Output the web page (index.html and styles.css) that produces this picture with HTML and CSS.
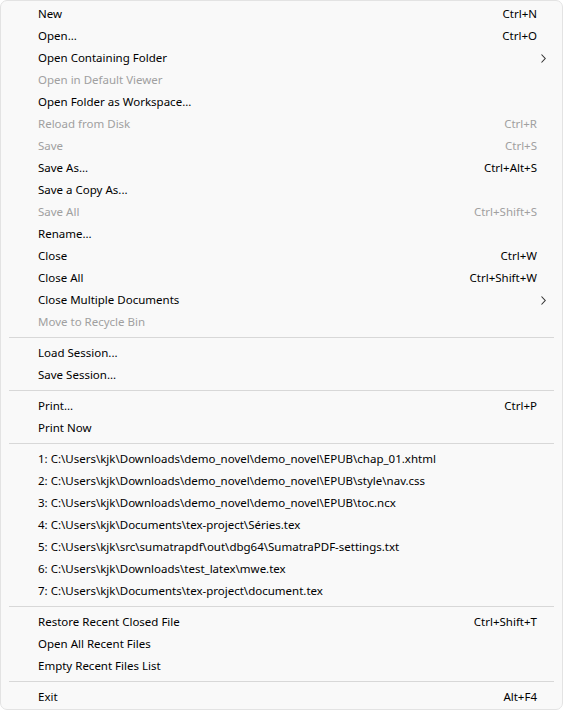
FILE: index.html
```html
<!DOCTYPE html>
<html>
<head>
<meta charset="utf-8">
<link rel="stylesheet" href="styles.css">
</head>
<body>
<div class="menu">
  <div class="item"><span class="label">New</span><span class="key">Ctrl+N</span></div>
  <div class="item"><span class="label">Open...</span><span class="key">Ctrl+O</span></div>
  <div class="item"><span class="label">Open Containing Folder</span><span class="key"></span><svg class="arrow" width="5" height="9" viewBox="0 0 5 9"><path d="M0.5 0.5 L4.2 4.5 L0.5 8.5" fill="none" stroke="#333" stroke-width="1.1"/></svg></div>
  <div class="item disabled"><span class="label">Open in Default Viewer</span><span class="key"></span></div>
  <div class="item"><span class="label">Open Folder as Workspace...</span><span class="key"></span></div>
  <div class="item disabled"><span class="label">Reload from Disk</span><span class="key">Ctrl+R</span></div>
  <div class="item disabled"><span class="label">Save</span><span class="key">Ctrl+S</span></div>
  <div class="item"><span class="label">Save As...</span><span class="key">Ctrl+Alt+S</span></div>
  <div class="item"><span class="label">Save a Copy As...</span><span class="key"></span></div>
  <div class="item disabled"><span class="label">Save All</span><span class="key">Ctrl+Shift+S</span></div>
  <div class="item"><span class="label">Rename...</span><span class="key"></span></div>
  <div class="item"><span class="label">Close</span><span class="key">Ctrl+W</span></div>
  <div class="item"><span class="label">Close All</span><span class="key">Ctrl+Shift+W</span></div>
  <div class="item"><span class="label">Close Multiple Documents</span><span class="key"></span><svg class="arrow" width="5" height="9" viewBox="0 0 5 9"><path d="M0.5 0.5 L4.2 4.5 L0.5 8.5" fill="none" stroke="#333" stroke-width="1.1"/></svg></div>
  <div class="item disabled"><span class="label">Move to Recycle Bin</span><span class="key"></span></div>
  <div class="sep"></div>
  <div class="item"><span class="label">Load Session...</span><span class="key"></span></div>
  <div class="item"><span class="label">Save Session...</span><span class="key"></span></div>
  <div class="sep"></div>
  <div class="item"><span class="label">Print...</span><span class="key">Ctrl+P</span></div>
  <div class="item"><span class="label">Print Now</span><span class="key"></span></div>
  <div class="sep"></div>
  <div class="item"><span class="label">1: C:\Users\kjk\Downloads\demo_novel\demo_novel\EPUB\chap_01.xhtml</span><span class="key"></span></div>
  <div class="item"><span class="label">2: C:\Users\kjk\Downloads\demo_novel\demo_novel\EPUB\style\nav.css</span><span class="key"></span></div>
  <div class="item"><span class="label">3: C:\Users\kjk\Downloads\demo_novel\demo_novel\EPUB\toc.ncx</span><span class="key"></span></div>
  <div class="item"><span class="label">4: C:\Users\kjk\Documents\tex-project\Séries.tex</span><span class="key"></span></div>
  <div class="item"><span class="label">5: C:\Users\kjk\src\sumatrapdf\out\dbg64\SumatraPDF-settings.txt</span><span class="key"></span></div>
  <div class="item"><span class="label">6: C:\Users\kjk\Downloads\test_latex\mwe.tex</span><span class="key"></span></div>
  <div class="item"><span class="label">7: C:\Users\kjk\Documents\tex-project\document.tex</span><span class="key"></span></div>
  <div class="sep"></div>
  <div class="item"><span class="label">Restore Recent Closed File</span><span class="key">Ctrl+Shift+T</span></div>
  <div class="item"><span class="label">Open All Recent Files</span><span class="key"></span></div>
  <div class="item"><span class="label">Empty Recent Files List</span><span class="key"></span></div>
  <div class="sep"></div>
  <div class="item"><span class="label">Exit</span><span class="key">Alt+F4</span></div>
</div>
</body>
</html>
```
FILE: styles.css
```css
html, body {
  margin: 0;
  padding: 0;
  background: #ffffff;
}
body {
  font-family: "Noto Sans", "Open Sans", sans-serif;
  font-size: 11.5px;
  color: #000000;
}
.menu {
  box-sizing: border-box;
  width: 563px;
  height: 710px;
  background: #f9f9f9;
  border: 1px solid #e3e3e3;
  border-radius: 7px;
  padding: 2px 0 0 0;
}
.item {
  box-sizing: border-box;
  height: 22px;
  display: flex;
  align-items: center;
  padding-left: 37px;
  padding-right: 25px;
  padding-bottom: 2px;
  position: relative;
  white-space: nowrap;
}
.label {
  flex: 1;
}
.key {
  text-align: right;
}
.disabled {
  color: #a0a0a0;
}
.arrow {
  position: absolute;
  right: 16px;
  top: 7px;
}
.sep {
  height: 9px;
  display: flex;
  align-items: center;
  padding: 0 8px 0 8px;
}
.sep::before {
  content: "";
  flex: 1;
  height: 1px;
  background: #d8d8d8;
}
```
